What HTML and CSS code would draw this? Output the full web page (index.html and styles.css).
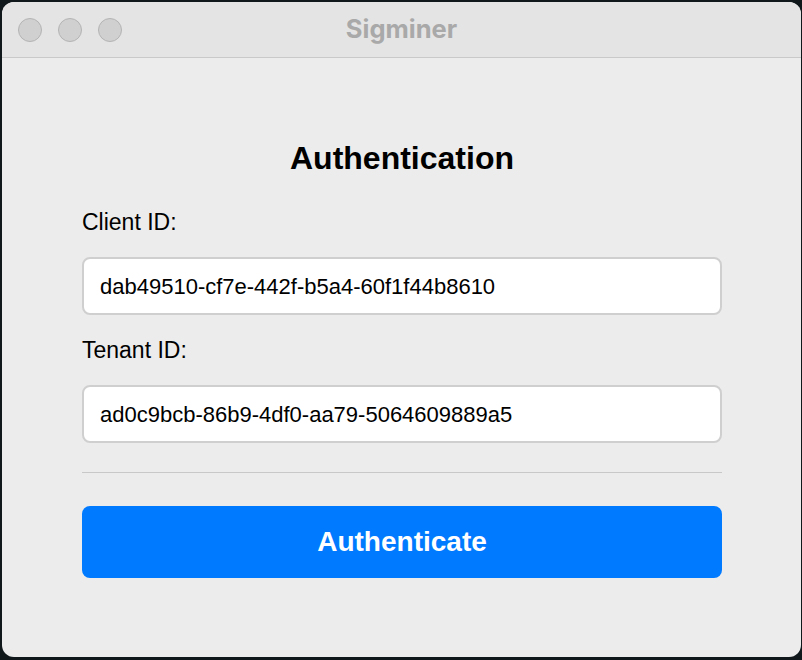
FILE: index.html
```html
<!DOCTYPE html>
<html>
<head>
<meta charset="utf-8">
<link rel="stylesheet" href="styles.css">
</head>
<body>
<div class="window">
  <div class="titlebar">
    <div class="lights">
      <span class="light"></span>
      <span class="light"></span>
      <span class="light"></span>
    </div>
    <div class="title">Sigminer</div>
  </div>
  <div class="content">
    <h1 class="heading">Authentication</h1>
    <label class="label">Client ID:</label>
    <div class="input">dab49510-cf7e-442f-b5a4-60f1f44b8610</div>
    <label class="label">Tenant ID:</label>
    <div class="input">ad0c9bcb-86b9-4df0-aa79-5064609889a5</div>
    <div class="sep"></div>
    <div class="button">Authenticate</div>
  </div>
</div>
</body>
</html>
```
FILE: styles.css
```css
html, body {
  margin: 0;
  padding: 0;
  background: #10181b;
  width: 802px;
  height: 660px;
  overflow: hidden;
}
* {
  box-sizing: border-box;
}
body {
  padding: 2px 1px 3px 2px;
  font-family: "Liberation Sans", Arial, sans-serif;
}
.window {
  width: 799px;
  height: 655px;
  background: #ececec;
  border-radius: 12px;
  overflow: hidden;
  display: flex;
  flex-direction: column;
}
.titlebar {
  height: 56px;
  flex: none;
  background: #e4e4e4;
  border-bottom: 1px solid #c9c9c9;
  position: relative;
  display: flex;
  align-items: center;
  justify-content: center;
}
.lights {
  position: absolute;
  left: 16px;
  top: 16px;
  display: flex;
  gap: 16px;
}
.light {
  width: 24px;
  height: 24px;
  border-radius: 50%;
  background: #d0d0d0;
  border: 1px solid #b4b4b4;
}
.title {
  font-family: Inter, "Liberation Sans", sans-serif;
  font-weight: 700;
  font-size: 25.5px;
  color: #a9a9a9;
  margin-top: -2px;
}
.content {
  padding: 0 79px 0 80px;
  display: flex;
  flex-direction: column;
}
.heading {
  margin: 80px 0 0 0;
  font-size: 32px;
  font-weight: 700;
  line-height: 40px;
  text-align: center;
  color: #000;
}
.label {
  margin-top: 29px;
  font-size: 23px;
  line-height: 30px;
  color: #000;
}
.input {
  margin-top: 20px;
  height: 58px;
  background: #fff;
  border: 2px solid #cfcfcf;
  border-radius: 8px;
  padding: 2px 16px 0 16px;
  display: flex;
  align-items: center;
  font-size: 22px;
  color: #000;
}
.input + .label {
  margin-top: 20px;
}
.sep {
  margin-top: 29px;
  height: 1px;
  background: #c8c8c8;
}
.button {
  margin-top: 33px;
  height: 72px;
  background: #007aff;
  border-radius: 8px;
  color: #fff;
  font-size: 28px;
  font-weight: 700;
  display: flex;
  align-items: center;
  justify-content: center;
}
```
